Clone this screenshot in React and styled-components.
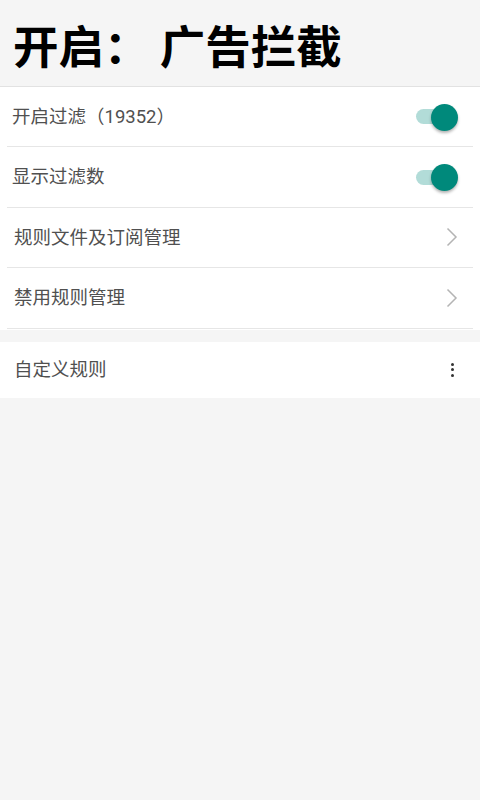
import React from 'react';
import styled, { createGlobalStyle } from 'styled-components';

const GlobalStyle = createGlobalStyle`
  html, body {
    margin: 0;
    padding: 0;
    background: #f5f5f5;
    font-family: Roboto, "Noto Sans CJK SC", "Noto Sans", sans-serif;
  }
  * { box-sizing: border-box; }
`;

const rows = [
  { label: '开启过滤（19352）', type: 'switch', inset: 12 },
  { label: '显示过滤数', type: 'switch', inset: 12 },
  { label: '规则文件及订阅管理', type: 'arrow', inset: 14 },
  { label: '禁用规则管理', type: 'arrow', inset: 14 },
];

const App = () => {
  return (
    <Page>
      <GlobalStyle />
      <Header>
        <Title>开启： 广告拦截</Title>
      </Header>
      <Card>
        {rows.map((row) => (
          <Row key={row.label}>
            <Label $inset={row.inset}>{row.label}</Label>
            {row.type === 'switch' ? (
              <Switch>
                <Track />
                <Thumb />
              </Switch>
            ) : (
              <Chevron viewBox="0 0 12 20">
                <path d="M1.5 1.5 L10 10 L1.5 18.5" />
              </Chevron>
            )}
          </Row>
        ))}
      </Card>
      <Section>
        <Label $inset={14}>自定义规则</Label>
        <More>
          <Dot />
          <Dot />
          <Dot />
        </More>
      </Section>
    </Page>
  );
};

const Page = styled.main`
  width: 480px;
  min-height: 800px;
  background: #f5f5f5;
`;

const Header = styled.header`
  height: 87px;
  display: flex;
  align-items: center;
  padding: 3px 0 0 13px;
  background: #f5f5f5;
  border-bottom: 1px solid #e2e2e2;
  border-top-right-radius: 8px;
`;

const Title = styled.h1`
  margin: 0;
  font-family: "Noto Sans CJK SC", sans-serif;
  font-size: 45.5px;
  font-weight: 700;
  color: #000;
  line-height: 1;
`;

const Card = styled.section`
  background: #fff;
  padding-bottom: 1px;
`;

const Row = styled.div`
  height: 60.4px;
  margin: 0 7px;
  display: flex;
  align-items: center;
  justify-content: space-between;
  border-bottom: 1px solid #e6e6e6;
`;

const Label = styled.span`
  padding-left: ${({ $inset }) => $inset - 7}px;
  padding-top: 1px;
  font-size: 18.5px;
  color: #505050;
  line-height: 1;
`;

const Switch = styled.div`
  position: relative;
  width: 46px;
  height: 28px;
  margin-right: 13px;
  display: flex;
  align-items: center;
`;

const Track = styled.div`
  width: 34px;
  height: 15px;
  margin-left: 2px;
  border-radius: 8px;
  background: #b2dcd8;
`;

const Thumb = styled.div`
  position: absolute;
  right: 2px;
  top: 1px;
  width: 27px;
  height: 27px;
  border-radius: 50%;
  background: #00897b;
  box-shadow: 0 2px 3px rgba(0, 0, 0, 0.3);
`;

const Chevron = styled.svg`
  width: 12px;
  height: 20px;
  margin-right: 15px;
  fill: none;
  stroke: #b4b4b4;
  stroke-width: 1.5;
`;

const Section = styled.section`
  margin-top: 12px;
  height: 56px;
  background: #fff;
  display: flex;
  align-items: center;
  justify-content: space-between;
  padding-left: 7px;
  padding-right: 26px;
`;

const More = styled.div`
  display: flex;
  flex-direction: column;
  gap: 2.5px;
`;

const Dot = styled.span`
  width: 3px;
  height: 3px;
  border-radius: 50%;
  background: #333;
`;

export default App;
